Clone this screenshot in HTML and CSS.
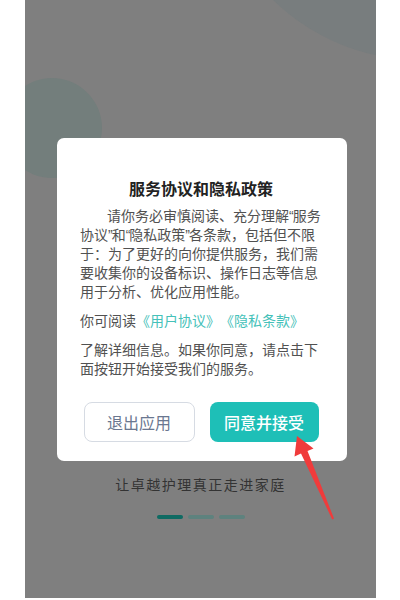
FILE: index.html
```html
<!DOCTYPE html>
<html lang="zh-CN">
<head>
<meta charset="utf-8">
<title>服务协议和隐私政策</title>
<link rel="stylesheet" href="styles.css">
</head>
<body>
<div class="screen">
  <div class="blob blob-left"></div>
  <div class="blob blob-top"></div>
  <div class="page">
    <p class="tagline">让卓越护理真正走进家庭</p>
    <div class="dots">
      <span class="dot active"></span>
      <span class="dot"></span>
      <span class="dot"></span>
    </div>
  </div>
  <div class="modal">
    <div class="dialog">
      <h1 class="title">服务协议和隐私政策</h1>
      <div class="body">
        <p class="para">
          <span class="line indent">请你务必审慎阅读、充分理解<span class="q">“</span>服务</span>
          <span class="line">协议<span class="q">”</span>和<span class="q">“</span>隐私政策<span class="q">”</span>各条款，包括但不限</span>
          <span class="line">于：为了更好的向你提供服务，我们需</span>
          <span class="line">要收集你的设备标识、操作日志等信息</span>
          <span class="line">用于分析、优化应用性能。</span>
        </p>
        <p class="para">
          <span class="line">你可阅读<a class="link">《用户协议》</a><a class="link">《隐私条款》</a></span>
        </p>
        <p class="para">
          <span class="line">了解详细信息。如果你同意，请点击下</span>
          <span class="line">面按钮开始接受我们的服务。</span>
        </p>
      </div>
      <div class="actions">
        <button class="btn btn-cancel">退出应用</button>
        <button class="btn btn-accept">同意并接受</button>
      </div>
    </div>
  </div>
  <svg class="arrow" viewBox="25 0 351 598" width="351" height="598">
    <polygon fill="#f03b3b" points="297,436 313.5,448.5 307.5,451 334,518.6 332.2,519.4 301,453.5 294.5,456.5"/>
  </svg>
</div>
</body>
</html>
```
FILE: styles.css
```css
* {
  box-sizing: border-box;
}

html, body {
  margin: 0;
  padding: 0;
  background: #ffffff;
}

body {
  font-family: "Roboto", "Noto Sans CJK SC", sans-serif;
}

.screen {
  position: relative;
  width: 351px;
  height: 598px;
  margin-left: 25px;
  background: #7f7f7f;
  overflow: hidden;
}

.blob {
  position: absolute;
  border-radius: 50%;
}

.blob-left {
  left: -23px;
  top: 78px;
  width: 100px;
  height: 100px;
  background: #737e7c;
}

.blob-top {
  left: 185px;
  top: -360px;
  width: 420px;
  height: 420px;
  background: #787d7e;
}

.page {
  position: relative;
  display: flex;
  flex-direction: column;
  align-items: center;
  padding-top: 475px;
}

.tagline {
  margin: 0;
  font-size: 14px;
  line-height: 20px;
  letter-spacing: 1.5px;
  color: #333333;
}

.dots {
  display: flex;
  gap: 5px;
  margin-top: 20px;
}

.dot {
  width: 26px;
  height: 4px;
  border-radius: 2px;
  background: #5e827e;
}

.dot.active {
  background: #0f6b63;
}

.modal {
  position: absolute;
  left: 0;
  top: 0;
  right: 0;
  bottom: 0;
  padding: 138px 0 0 32px;
}

.dialog {
  width: 290px;
  height: 323px;
  background: #ffffff;
  border-radius: 7px;
  padding: 40px 27px 19px 23px;
  display: flex;
  flex-direction: column;
}

.title {
  margin: 0;
  font-size: 16px;
  line-height: 24px;
  font-weight: bold;
  text-align: center;
  color: #222222;
  padding-left: 2px;
}

.body {
  margin-top: 5px;
  font-size: 14px;
  line-height: 19px;
  color: #515151;
  text-spacing-trim: space-all;
}

.para {
  margin: 0 0 10px 0;
}

.para:last-child {
  margin-bottom: 0;
}

.line {
  display: block;
  white-space: nowrap;
}

.indent {
  padding-left: 27px;
}

.q {
  font-family: "Liberation Sans", sans-serif;
  letter-spacing: -1px;
}

.link {
  color: #45c1b9;
}

.actions {
  display: flex;
  justify-content: center;
  gap: 15px;
  margin-top: auto;
  margin-left: 2px;
}

.btn {
  height: 40px;
  border-radius: 8px;
  font-family: "Roboto", "Noto Sans CJK SC", sans-serif;
  font-size: 16px;
  padding: 0;
  cursor: pointer;
}

.btn-cancel {
  width: 111px;
  background: #ffffff;
  border: 1px solid #d6dbe3;
  color: #6a7790;
}

.btn-accept {
  width: 109px;
  background: #1ebfb7;
  border: none;
  color: #ffffff;
  font-weight: 500;
}

.arrow {
  position: absolute;
  left: 0;
  top: 0;
  pointer-events: none;
}
```
